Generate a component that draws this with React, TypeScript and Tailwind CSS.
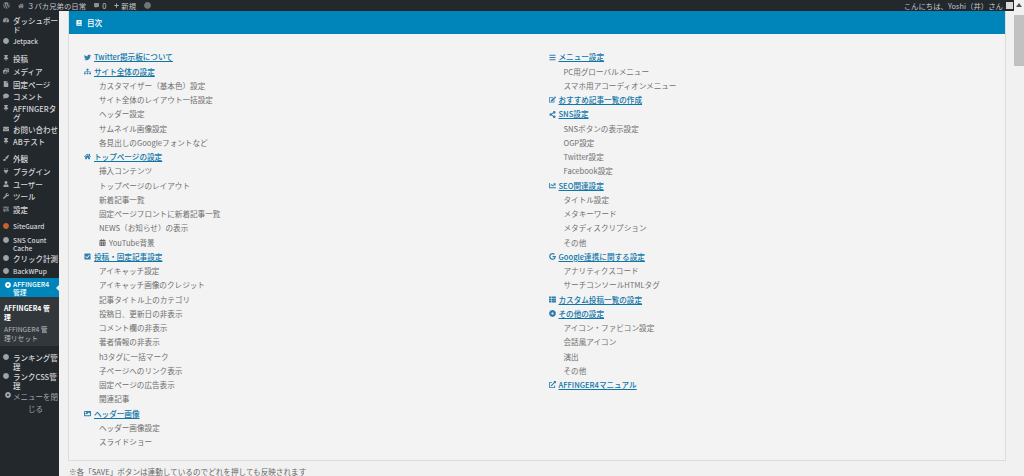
import type { ReactNode } from "react";
import {
  FaTwitter,
  FaSitemap,
  FaHome,
  FaCheckSquare,
  FaImage,
  FaBars,
  FaEdit,
  FaShareAlt,
  FaChartLine,
  FaGoogle,
  FaThList,
  FaExternalLinkAlt,
  FaBook,
  FaWordpress,
  FaCommentAlt,
  FaPlus,
  FaThumbtack,
  FaPhotoVideo,
  FaFile,
  FaComment,
  FaEnvelope,
  FaPaintBrush,
  FaPlug,
  FaUser,
  FaWrench,
  FaSlidersH,
  FaCircle,
  FaTachometerAlt,
  FaDotCircle,
  FaCalendarAlt,
} from "react-icons/fa";

const font = "font-['Noto_Sans_CJK_JP','Noto_Sans',sans-serif]";

type Entry = { icon?: ReactNode; title: string; subs?: ReactNode[] };

const left: Entry[] = [
  { icon: <FaTwitter />, title: "Twitter掲示板について" },
  {
    icon: <FaSitemap />,
    title: "サイト全体の設定",
    subs: ["カスタマイザー（基本色）設定", "サイト全体のレイアウト一括設定", "ヘッダー設定", "サムネイル画像設定", "各見出しのGoogleフォントなど"],
  },
  {
    icon: <FaHome />,
    title: "トップページの設定",
    subs: [
      "挿入コンテンツ",
      "トップページのレイアウト",
      "新着記事一覧",
      "固定ページフロントに新着記事一覧",
      "NEWS（お知らせ）の表示",
      <span className="flex items-center gap-[3px]" key="yt">
        <FaCalendarAlt className="text-[7px] text-[#666]" /> YouTube背景
      </span>,
    ],
  },
  {
    icon: <FaCheckSquare />,
    title: "投稿・固定記事設定",
    subs: ["アイキャッチ設定", "アイキャッチ画像のクレジット", "記事タイトル上のカテゴリ", "投稿日、更新日の非表示", "コメント欄の非表示", "著者情報の非表示", "h3タグに一括マーク", "子ページへのリンク表示", "固定ページの広告表示", "関連記事"],
  },
  { icon: <FaImage />, title: "ヘッダー画像", subs: ["ヘッダー画像設定", "スライドショー"] },
];

const right: Entry[] = [
  { icon: <FaBars />, title: "メニュー設定", subs: ["PC用グローバルメニュー", "スマホ用アコーディオンメニュー"] },
  { icon: <FaEdit />, title: "おすすめ記事一覧の作成" },
  { icon: <FaShareAlt />, title: "SNS設定", subs: ["SNSボタンの表示設定", "OGP設定", "Twitter設定", "Facebook設定"] },
  { icon: <FaChartLine />, title: "SEO関連設定", subs: ["タイトル設定", "メタキーワード", "メタディスクリプション", "その他"] },
  { icon: <FaGoogle />, title: "Google連携に関する設定", subs: ["アナリティクスコード", "サーチコンソールHTMLタグ"] },
  { icon: <FaThList />, title: "カスタム投稿一覧の設定" },
  { icon: <FaDotCircle />, title: "その他の設定", subs: ["アイコン・ファビコン設定", "会話風アイコン", "演出", "その他"] },
  { icon: <FaExternalLinkAlt />, title: "AFFINGER4マニュアル" },
];

function Section({ entry }: { entry: Entry }) {
  return (
    <li>
      <div className="flex h-[14.25px] items-center">
        <span className="flex w-[10px] justify-start text-[7px] text-[#2f7fae]">{entry.icon}</span>
        <a className="text-[7.6px] font-medium text-[#0f76a8] underline">{entry.title}</a>
      </div>
      {entry.subs?.map((s, i) => (
        <div key={i} className="flex h-[14.25px] items-center pl-[15px] text-[7.6px] text-[#6f6f6f]">
          {s}
        </div>
      ))}
    </li>
  );
}

type MenuItem = { icon: ReactNode; label: string; h: number };

const menu: MenuItem[] = [
  { icon: <FaTachometerAlt />, label: "ダッシュボード", h: 21.5 },
  { icon: <FaCircle />, label: "Jetpack", h: 17 },
  { icon: <FaThumbtack />, label: "投稿", h: 13 },
  { icon: <FaPhotoVideo />, label: "メディア", h: 13 },
  { icon: <FaFile />, label: "固定ページ", h: 12 },
  { icon: <FaComment />, label: "コメント", h: 12 },
  { icon: <FaThumbtack />, label: "AFFINGERタグ", h: 21 },
  { icon: <FaEnvelope />, label: "お問い合わせ", h: 12 },
  { icon: <FaThumbtack />, label: "ABテスト", h: 17 },
  { icon: <FaPaintBrush />, label: "外観", h: 13 },
  { icon: <FaPlug />, label: "プラグイン", h: 13 },
  { icon: <FaUser />, label: "ユーザー", h: 12 },
  { icon: <FaWrench />, label: "ツール", h: 13 },
  { icon: <FaSlidersH />, label: "設定", h: 17 },
  { icon: <FaCircle className="text-[#c8622a]" />, label: "SiteGuard", h: 14 },
  { icon: <FaCircle />, label: "SNS Count Cache", h: 18 },
  { icon: <FaCircle />, label: "クリック計測", h: 13 },
  { icon: <FaCircle />, label: "BackWPup", h: 13 },
];

function SideItem({ item }: { item: MenuItem }) {
  const small = /^[A-Za-z ]+$/.test(item.label);
  return (
    <div className="flex items-start pl-[3px] text-[#d4d6d8]" style={{ height: item.h }}>
      <span className="mt-[3px] w-[10px] shrink-0 text-[6px] text-[#9ea3a8]">{item.icon}</span>
      <span className={`font-medium ${small ? "text-[6.6px] leading-[8px]" : "break-all text-[7.5px] leading-[9px]"} pt-[2px]`}>{item.label}</span>
    </div>
  );
}

export default function App() {
  return (
    <div className={`flex h-[476px] w-[1024px] overflow-hidden bg-[#f1f1f1] ${font}`}>
      <div className="flex min-w-0 flex-1 flex-col">
        {/* admin bar */}
        <header className="flex h-[11px] shrink-0 items-center justify-between bg-[#23282d] pl-[3px] pr-[1px] text-[7.4px] text-[#c4c7ca]">
          <div className="flex items-center gap-[8px]">
            <FaWordpress className="text-[7px] text-[#8a8f94]" />
            <span className="flex items-center gap-[3px]">
              <FaHome className="text-[6px] text-[#8a8f94]" /> ３バカ兄弟の日常
            </span>
            <span className="flex items-center gap-[3px]">
              <FaCommentAlt className="text-[5px] text-[#8a8f94]" /> 0
            </span>
            <span className="flex items-center gap-[2px]">
              <FaPlus className="text-[5px] text-[#a9adb1]" /> 新規
            </span>
            <FaCircle className="text-[7px] text-[#70757a]" />
          </div>
          <div className="flex items-center gap-[3px]">
            <span>こんにちは、Yoshi（井）さん</span>
            <span className="h-[7px] w-[7px] bg-[#d9d9d9]" />
          </div>
        </header>

        <div className="flex min-h-0 flex-1">
          {/* sidebar */}
          <aside className="flex w-[59px] shrink-0 flex-col bg-[#23282d] pt-[2.5px]">
            {menu.map((m) => (
              <SideItem key={m.label} item={m} />
            ))}
            <div className="relative flex h-[19px] items-start bg-[#0085ba] pl-[3px] text-white">
              <FaDotCircle className="mt-[4px] w-[10px] shrink-0 text-[6px]" />
              <span className="pt-[2px] text-[6.8px] font-medium leading-[8px]">
                AFFINGER4
                <br />
                管理
              </span>
              <span className="absolute right-0 top-[7px] h-0 w-0 border-y-[3px] border-r-[3px] border-y-transparent border-r-[#f1f1f1]" />
            </div>
            <div className="h-[49px] bg-[#32373c] pl-[4px] pt-[7px]">
              <div className="w-[50px] break-all text-[6.8px] font-bold leading-[9px] text-white">AFFINGER4 管理</div>
              <div className="mt-[3px] w-[50px] break-all text-[6.8px] leading-[9px] text-[#b4b9be]">AFFINGER4 管理リセット</div>
            </div>
            <div className="h-[5px]" />
            <SideItem item={{ icon: <FaCircle />, label: "ランキング管理", h: 19 }} />
            <SideItem item={{ icon: <FaCircle />, label: "ランクCSS管理", h: 19 }} />
            <div className="flex items-start pl-[3px] text-[#a0a5aa]">
              <FaDotCircle className="mt-[3px] w-[10px] shrink-0 text-[6px]" />
              <span className="w-[45px] break-all pt-[2px] text-center text-[7.5px] leading-[12px]">メニューを閉じる</span>
            </div>
          </aside>

          {/* main */}
          <main className="min-w-0 flex-1 pl-[9px] pr-[8px]">
            <section className="flex h-[450px] flex-col border-x border-b border-[#dcdcdc] bg-[#f3f3f3]">
              <div className="flex h-[23px] shrink-0 items-center gap-[5px] bg-[#0085ba] pl-[7px] text-[7.6px] font-medium text-white">
                <FaBook className="text-[6px]" />
                目次
              </div>
              <div className="grid flex-1 grid-cols-2 pl-[15px] pt-[16px]">
                <ul>
                  {left.map((e) => (
                    <Section key={e.title} entry={e} />
                  ))}
                </ul>
                <ul className="pl-[4px]">
                  {right.map((e) => (
                    <Section key={e.title} entry={e} />
                  ))}
                </ul>
              </div>
            </section>
            <p className="mt-[6px] whitespace-nowrap pl-[1px] text-[7.6px] leading-[9px] text-[#666]">
              ※各「SAVE」ボタンは連動しているのでどれを押しても反映されます
            </p>
          </main>
        </div>
      </div>

      {/* scrollbar */}
      <div className="flex w-[10px] shrink-0 flex-col items-center bg-[#f1f1f1]">
        <span className="mt-[3px] h-0 w-0 border-x-[3px] border-b-[4px] border-x-transparent border-b-[#505050]" />
        <span className="mt-[8px] h-[51px] w-full bg-[#c1c1c1]" />
      </div>
    </div>
  );
}
